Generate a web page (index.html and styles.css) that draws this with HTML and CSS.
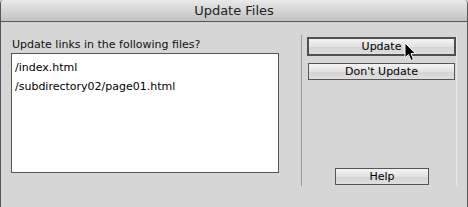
FILE: index.html
```html
<!DOCTYPE html>
<html lang="en">
<head>
  <meta charset="UTF-8">
  <title>Update Files</title>
  <link rel="stylesheet" href="styles.css">
</head>
<body>
  <div class="window">
    <div class="titlebar">Update Files</div>
    <div class="content">
      <div class="left-col">
        <div class="prompt">Update links in the following files?</div>
        <div class="file-list">
          <div class="file-item">/index.html</div>
          <div class="file-item">/subdirectory02/page01.html</div>
        </div>
      </div>
      <div class="right-col">
        <button class="btn btn-default">Update</button>
        <button class="btn btn-wide">Don't Update</button>
        <button class="btn btn-help">Help</button>
      </div>
    </div>
    <!-- mouse pointer sitting over the Update button -->
    <svg class="cursor" width="13" height="20" viewBox="0 0 13 20">
      <path d="M1 1 L1 16 L4.5 12.5 L7 18.5 L9.5 17.5 L7 11.5 L11.5 11.5 Z" fill="#000" stroke="#fff" stroke-width="1"/>
    </svg>
  </div>
</body>
</html>
```

FILE: styles.css
```css
body {
  margin: 0;
  background-color: #d6d6d6;
  font-family: "DejaVu Sans", Verdana, sans-serif;
}
.window {
  position: relative;
  width: 468px;
  height: 207px;
  background-color: #d6d6d6;
  box-sizing: border-box;
  border-left: 1px solid #555;
  border-right: 1px solid #555;
  border-radius: 4px 4px 0 0;
  overflow: hidden;
}
.titlebar {
  height: 21px;
  line-height: 22px;
  border-bottom: 1px solid #555;
  background: linear-gradient(#e9e9e9, #c2c2c2);
  text-align: center;
  font-size: 13px;
  color: #222;
}
.content {
  display: flex;
  height: 185px;
}
.left-col {
  width: 268px;
  padding-left: 10px;
  padding-top: 16px;
}
.prompt {
  font-size: 11px;
  line-height: 14px;
  color: #111;
  padding-left: 1px;
}
.file-list {
  margin-top: 1px;
  height: 114px;
  background-color: #fff;
  border: 1px solid #555;
  padding-top: 4px;
}
.file-item {
  font-size: 11px;
  line-height: 19px;
  padding-left: 3px;
  color: #000;
}
.right-col {
  display: flex;
  flex-direction: column;
  align-items: flex-start;
  margin-left: 22px;
  margin-top: 13px;
  height: 151px;
  border-left: 1px solid #9a9a9a;
  box-shadow: 1px 0 0 #e6e6e6;
  padding-left: 5px;
  padding-top: 2px;
  box-sizing: border-box;
}
.btn {
  font-family: "DejaVu Sans", Verdana, sans-serif;
  font-size: 11px;
  color: #000;
  background: linear-gradient(#f4f4f4, #e2e2e2 50%, #d4d4d4 51%, #dedede);
  border: 1px solid #555;
  padding: 0;
  margin: 0;
  box-sizing: border-box;
}
.btn-default {
  width: 149px;
  height: 19px;
  border: 2px solid #4f4f4f;
}
.btn-wide {
  width: 147px;
  height: 17px;
  margin-top: 7px;
  margin-left: 1px;
}
.btn-help {
  width: 94px;
  height: 17px;
  margin-top: auto;
  margin-left: 28px;
  margin-bottom: 1px;
}
.cursor {
  position: absolute;
  left: 403px;
  top: 42px;
}
```
